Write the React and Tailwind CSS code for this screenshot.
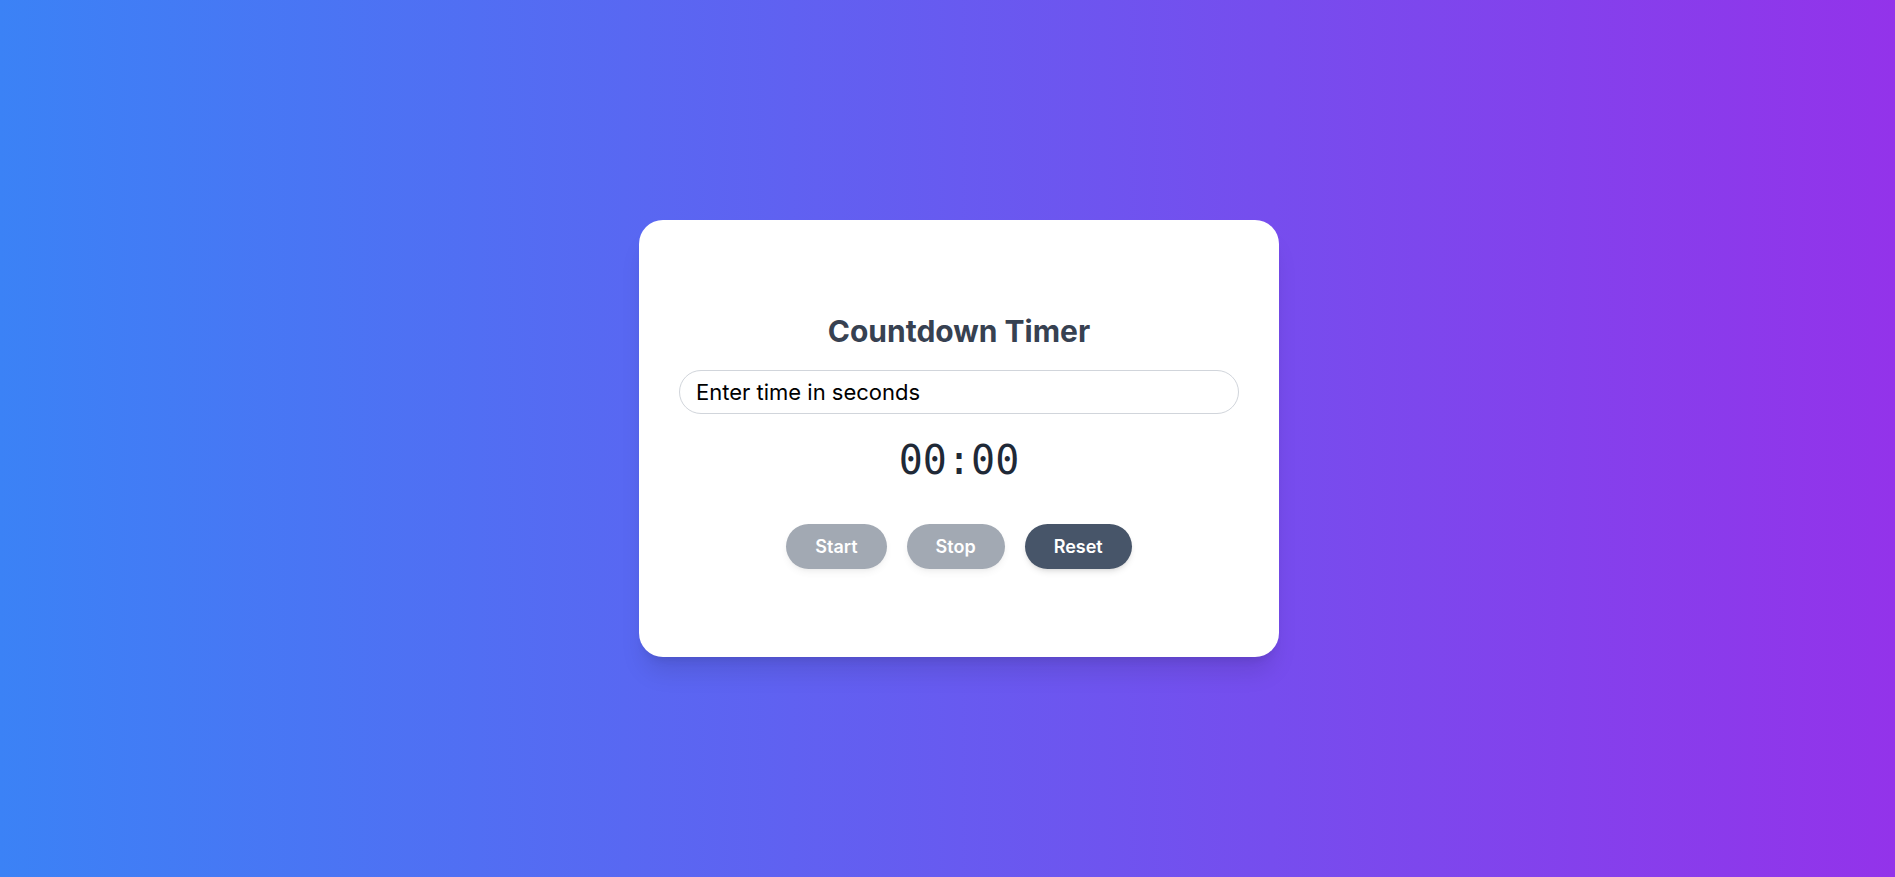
import React, { useEffect, useRef, useState } from "react";

// Countdown timer card on a blue → purple gradient
const pad = (n) => String(n).padStart(2, "0");

export default function App() {
  const [input, setInput] = useState("");
  const [left, setLeft] = useState(0);
  const [running, setRunning] = useState(false);
  const tick = useRef(null);

  useEffect(() => {
    if (!running) return;
    tick.current = setInterval(() => {
      setLeft((s) => {
        if (s <= 1) {
          setRunning(false);
          return 0;
        }
        return s - 1;
      });
    }, 1000);
    return () => clearInterval(tick.current);
  }, [running]);

  const secs = parseInt(input, 10);
  const canStart = !running && (left > 0 || secs > 0);

  const start = () => {
    if (left === 0 && secs > 0) setLeft(secs);
    setRunning(true);
  };
  const stop = () => setRunning(false);
  const reset = () => {
    setRunning(false);
    setLeft(0);
    setInput("");
  };

  return (
    <div
      className="min-h-screen flex items-center justify-center pl-[23px] bg-[linear-gradient(to_right,#3b82f6,#9333ea)]"
      style={{ fontFamily: "Inter, 'Noto Sans', sans-serif" }}
    >
      <div className="w-[640px] bg-white rounded-3xl shadow-xl px-10 pt-[93px] pb-[88px] flex flex-col items-center">
        <h1 className="text-3xl leading-9 font-bold text-[#374151]">Countdown Timer</h1>

        <input
          type="number"
          value={input}
          onChange={(e) => setInput(e.target.value)}
          placeholder="Enter time in seconds"
          className="mt-[21px] w-full h-11 px-4 text-[22px] text-black placeholder:text-black border border-[#d1d5db] rounded-full outline-none focus:border-[#475569]"
        />

        <div
          className="mt-4 text-[40px] leading-[60px] text-[#1f2937]"
          style={{ fontFamily: "'DejaVu Sans Mono', monospace" }}
        >
          {pad(Math.floor(left / 60))}:{pad(left % 60)}
        </div>

        <div className="mt-[34px] flex gap-5">
          <button
            onClick={start}
            disabled={!canStart}
            className="px-[29px] py-2 leading-[29px] text-lg font-semibold text-white bg-[#475569] rounded-full shadow-md disabled:opacity-50"
          >
            Start
          </button>
          <button
            onClick={stop}
            disabled={!running}
            className="px-[29px] py-2 leading-[29px] text-lg font-semibold text-white bg-[#475569] rounded-full shadow-md disabled:opacity-50"
          >
            Stop
          </button>
          <button
            onClick={reset}
            className="px-[29px] py-2 leading-[29px] text-lg font-semibold text-white bg-[#475569] rounded-full shadow-md"
          >
            Reset
          </button>
        </div>
      </div>
    </div>
  );
}
